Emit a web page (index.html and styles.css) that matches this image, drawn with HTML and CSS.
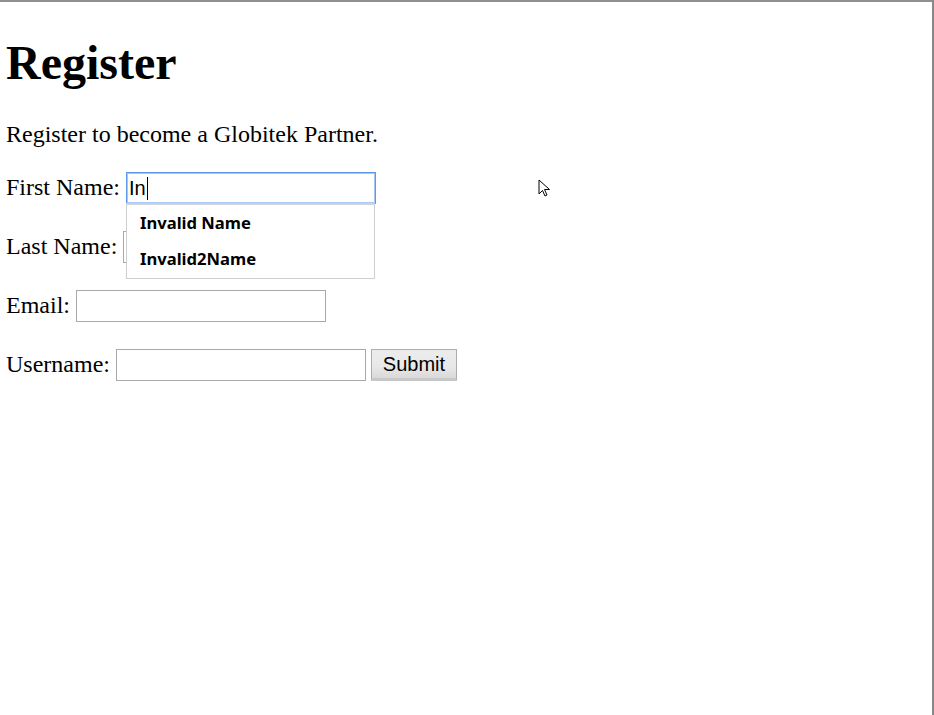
FILE: index.html
```html
<!DOCTYPE html>
<html>
<head>
<meta charset="utf-8">
<title>Register</title>
<link rel="stylesheet" href="styles.css">
</head>
<body>
<div class="frame">
  <h1 class="title">Register</h1>
  <p class="lead">Register to become a Globitek Partner.</p>
  <form class="form">
    <p class="row row-first">First Name: <span class="field field-focus">In<span class="caret"></span></span>
      <span class="suggest">
        <span class="suggest-item">Invalid Name</span>
        <span class="suggest-item">Invalid2Name</span>
      </span>
    </p>
    <p class="row">Last Name: <input class="field" type="text"></p>
    <p class="row">Email: <input class="field" type="text"></p>
    <p class="row">Username: <input class="field" type="text"> <button class="submit" type="button">Submit</button></p>
  </form>
  <svg class="pointer" width="14" height="20" viewBox="0 0 14 20"><path d="M1 1 L1 15 L4.5 11.5 L7 17 L9 16 L6.5 10.5 L11.5 10.5 Z" fill="#fff" stroke="#000" stroke-width="1" stroke-linejoin="miter"/></svg>
</div>
</body>
</html>
```
FILE: styles.css
```css
html, body {
  margin: 0;
  padding: 0;
  background: #fff;
}
.frame {
  position: relative;
  box-sizing: border-box;
  width: 934px;
  height: 715px;
  border-top: 2px solid #8f8f8f;
  border-right: 2px solid #888;
  padding: 0 6px;
  font-family: "Liberation Serif", "Times New Roman", serif;
  font-size: 24px;
  color: #000;
  overflow: hidden;
}
.title {
  font-size: 48px;
  font-weight: bold;
  margin: 33px 0 0;
  line-height: 55px;
}
.lead {
  margin: 30px 0 0;
  line-height: 28px;
}
.form {
  margin: 0;
}
.row {
  position: relative;
  margin: 24px 0 0;
  height: 35px;
  line-height: 35px;
}
.row-first {
  margin-top: 22px;
}
.field {
  box-sizing: border-box;
  display: inline-block;
  vertical-align: middle;
  width: 250px;
  height: 32px;
  margin: 0;
  padding: 0 3px 0 2px;
  border: 1px solid #a9a9a9;
  background: #fff;
  font-family: "Liberation Sans", Arial, sans-serif;
  font-size: 20px;
  line-height: 30px;
  position: relative;
  top: -1px;
}
.field-focus {
  border-color: #5d98e8;
  box-shadow: 0 0 0 1px #a8c8f3 inset;
  color: #000;
}
.caret {
  display: inline-block;
  width: 1px;
  height: 23px;
  background: #000;
  vertical-align: -5px;
  margin-left: 1px;
}
.suggest {
  position: absolute;
  left: 120px;
  top: 33px;
  width: 249px;
  box-sizing: border-box;
  border: 1px solid #cfcfcf;
  border-top: 2px solid #d0d4d9;
  background: #fff;
  padding: 0 0 1px;
  z-index: 2;
  display: flex;
  flex-direction: column;
}
.suggest-item {
  display: block;
  height: 36px;
  line-height: 36px;
  padding-left: 13px;
  font-family: "Noto Sans", "Open Sans", sans-serif;
  font-weight: bold;
  font-size: 16.6px;
  color: #000;
}
.submit {
  box-sizing: border-box;
  vertical-align: middle;
  position: relative;
  top: -1px;
  width: 86px;
  height: 32px;
  margin: 0 0 0 -1px;
  padding: 0;
  border: 1px solid #adadad;
  background: linear-gradient(#ececec 0%, #e8e8e8 60%, #d9d9d9 100%);
  border-bottom: 3px solid #c8c8c8;
  font-family: "Liberation Sans", Arial, sans-serif;
  font-size: 20px;
  color: #000;
}
.pointer {
  position: absolute;
  left: 538px;
  top: 177px;
}
```
